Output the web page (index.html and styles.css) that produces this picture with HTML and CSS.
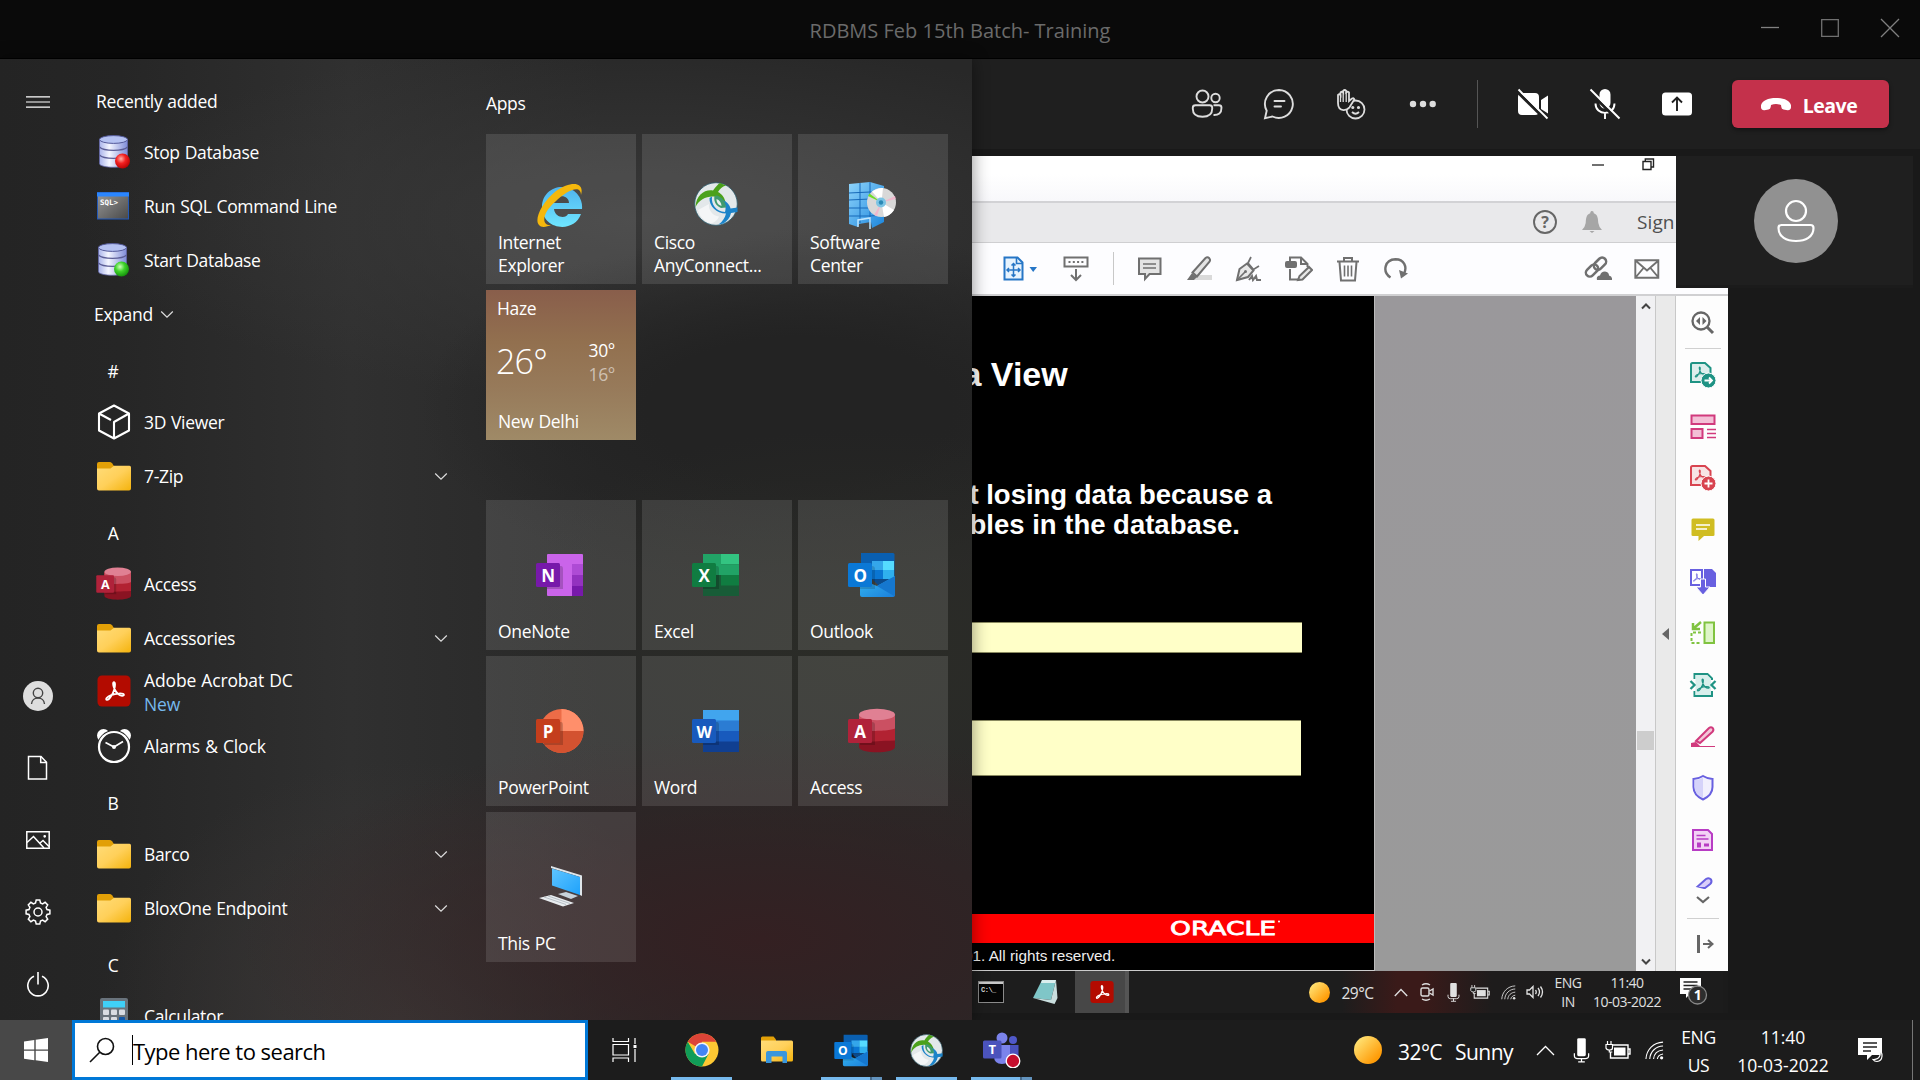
FILE: index.html
```html
<!DOCTYPE html>
<html lang="en">
<head>
<meta charset="utf-8">
<title>RDBMS Feb 15th Batch- Training</title>
<link rel="stylesheet" href="styles.css">
</head>
<body>
<svg class="defs" width="0" height="0" aria-hidden="true">
  <defs>
    <linearGradient id="gFolder" x1="0" y1="0" x2="1" y2="1"><stop offset="0" stop-color="#ffdc78"/><stop offset=".5" stop-color="#ffd05a"/><stop offset="1" stop-color="#f4b30c"/></linearGradient>
    <linearGradient id="gDb" x1="0" x2="1"><stop offset="0" stop-color="#aab4ea"/><stop offset=".35" stop-color="#f4f6ff"/><stop offset="1" stop-color="#7f8cd8"/></linearGradient>
    <linearGradient id="gSun" x1="0" y1="0" x2="1" y2="1"><stop offset=".1" stop-color="#ffe578"/><stop offset=".8" stop-color="#ff9c08"/></linearGradient>
    <linearGradient id="gIe" x1="0" y1="0" x2="0" y2="1"><stop offset="0" stop-color="#4fb4ef"/><stop offset="1" stop-color="#6fe6ff"/></linearGradient>
    <linearGradient id="gTerm" x1="0" y1="0" x2="1" y2="1"><stop offset="0" stop-color="#9a9a9a"/><stop offset="1" stop-color="#484848"/></linearGradient>
    <radialGradient id="gRed" cx=".4" cy=".35" r=".7"><stop offset="0" stop-color="#ffb0a8"/><stop offset=".45" stop-color="#f32020"/><stop offset="1" stop-color="#b00000"/></radialGradient>
    <radialGradient id="gGreen" cx=".4" cy=".35" r=".7"><stop offset="0" stop-color="#d0ffc0"/><stop offset=".45" stop-color="#3fd22a"/><stop offset="1" stop-color="#108a08"/></radialGradient>
    <linearGradient id="gEnv" x1="0" y1="0" x2="1" y2="1"><stop offset="0" stop-color="#35b8f1"/><stop offset="1" stop-color="#1b7fdb"/></linearGradient>
    <linearGradient id="gScreen" x1="0" y1="0" x2="1" y2="1"><stop offset="0" stop-color="#5ec4ff"/><stop offset="1" stop-color="#1ea2fb"/></linearGradient>
    <linearGradient id="gRack" x1="0" y1="0" x2="1" y2="1"><stop offset="0" stop-color="#8fd4fb"/><stop offset="1" stop-color="#1b86dd"/></linearGradient>
  </defs>
  <symbol id="chev" viewBox="0 0 14 9"><path d="M1.2 1.5 7 7.2l5.8-5.7" fill="none" stroke="currentColor" stroke-width="1.2"/></symbol>
  <symbol id="folder" viewBox="0 0 34 29"><path d="M0 7V2Q0 0 2 0H12.500Q14 0 15 1.200L17 4v3z" fill="#e2a007"/><path d="M0 6.500H13.500L17 3.700H32.500Q34 3.700 34 5.500V26.500Q34 28.500 32 28.500H2Q0 28.500 0 26.500z" fill="url(#gFolder)"/></symbol>
  <symbol id="db" viewBox="0 0 34 34"><path d="M2.500 4.500v24c0 5 28 5 28 0v-24z" fill="url(#gDb)" stroke="#6468a8" stroke-width=".8"/><ellipse cx="16.500" cy="4.500" rx="14" ry="3.900" fill="#b5c2f2" stroke="#545a9a" stroke-width="1"/><path d="M2.500 12c4 4.500 24 4.500 28 0M2.500 20c4 4.500 24 4.500 28 0" fill="none" stroke="#5c5e96" stroke-width="1.300"/></symbol>
  <symbol id="pdfmark" viewBox="0 0 20 20"><path d="M9.300 1.500c1.800 0 1.300 4.300.3 7.500-1.200 3.800-4.600 9.600-6.700 9.500-1.900-.2-.5-3 4-4.600 4-1.500 11.500-2.300 12-.5.400 1.700-3.200 1.600-5.700-.6C9.700 9.700 7.500 1.700 9.300 1.500z" fill="none" stroke="currentColor" stroke-width="1.700"/></symbol>
  <symbol id="acrobat" viewBox="0 0 34 32"><rect x=".5" y=".5" width="33" height="31" rx="4.500" fill="#b30b00"/><svg x="7" y="5.500" width="21" height="21" color="#fff"><use href="#pdfmark"/></svg></symbol>
  <symbol id="accessIcon" viewBox="0 0 48 46"><path d="M11 7v32c0 7 36 7 36 0V7z" fill="#8a1322"/><path d="M11 7v27.500c6 0 6 -1 36-2V7z" fill="#b22232"/><path d="M11 7v15c0 1.500 36 1.500 36-2V7z" fill="#cb5062"/><ellipse cx="29" cy="6.500" rx="18" ry="5.800" fill="#e08093"/><path d="M12 14h12q3 0 3 3v20H12z" fill="#000" opacity=".18"/><rect y="11" width="24" height="24" rx="1.500" fill="#b0223a"/><text x="12" y="29.500" class="ico-letter">A</text></symbol>
  <symbol id="outlookIcon" viewBox="0 0 48 46"><path d="M13 1h32q1.500 0 1.500 1.500V25H13z" fill="#0a5fb0"/><path d="M24 9h11v9H24z" fill="#34a6ea"/><path d="M35 9h11v9H35z" fill="#55dbff"/><path d="M24 18h11v9H24z" fill="#0a76d3"/><path d="M35 18h11v9H35z" fill="#2fb0ee"/><path d="M13 18h11v15H13z" fill="#0b55a0"/><path d="M24 27h21L31 34z" fill="#0b4a8c"/><path d="M12 27l17 7L47 24v19q0 2-2 2H14q-2 0-2-2z" fill="url(#gEnv)"/><path d="M29 34l18-10v19l-1 1z" fill="#1577cf"/><path d="M12 14h12q3 0 3 3v20H12z" fill="#000" opacity=".15"/><rect y="11" width="24" height="24" rx="1.500" fill="#0a78d6"/><text x="12" y="29.500" class="ico-letter">O</text></symbol>
  <symbol id="anyc" viewBox="0 0 44 44"><circle cx="22" cy="22" r="21.300" fill="#e3e8ea" stroke="#2c5c6c" stroke-width=".8"/><path d="M1.500 25C2 13 11 7 19 8.500c3-4 5-6.500 7-7.500l6 2.500c-4 1-6 3.500-8 6.500 4 2 7 6 8 12h-4.500c-.5-4-3-7-7.500-7.500C12 14 5 18 1.500 25z" fill="#4ba11b"/><path d="M18 14.500c-1 8 4 15 13 15.500 1.500-5 0-9-3.500-12.500 5.500 2 8.500 5.500 9 9l7-1v4.500l-6.500 1c-1 5-4 8-7.500 10.500l-5 1c4-3 6.500-6.500 7.500-11C22.500 31.500 15 24 15.500 16z" fill="#1b83c9"/><path d="M20.500 14c-1 5 1 9.500 6.500 12l5-.5c-.5-6-4-10.500-9-12z" fill="#3f9a6e"/><path d="M22.500 17c0 4 2 6 5 7 0-3-2-6-5-7z" fill="#e8efef"/><path d="M4 28l11-6c-1 6 4 12 10 12.500-2 5-7 8-11 6S5 34 4 28z" fill="#fff" opacity=".6"/></symbol>
  <symbol id="micIc" viewBox="0 0 20 26"><rect x="5.500" y="0" width="9" height="19" rx="1.500" fill="currentColor"/><path d="M2.500 16v2.500q0 3 3.500 3h8q3.500 0 3.500-3V16M10 21v4M6.500 25h7" fill="none" stroke="currentColor" stroke-width="1.300"/></symbol>
  <symbol id="battIc" viewBox="0 0 26 20"><path d="M8 5h15v13H5.500v-6M23 9h2v5h-2" fill="none" stroke="currentColor" stroke-width="1.400"/><rect x="9" y="7.500" width="11.500" height="8" fill="currentColor"/><path d="M2.500 1v3M6 1v3M1 4.500h6.500V8q0 2-3 2T1 8z M4.300 10v2h3" fill="#1c1c1c" stroke="currentColor" stroke-width="1.200"/></symbol>
  <symbol id="wifiIc" viewBox="0 0 20 20"><g fill="none" stroke="currentColor" stroke-width="1.150"><path d="M1 19C1.500 9 9 1.500 19 1.200"/><path d="M5 19C5.500 11 11.500 5.500 19 5.300"/><path d="M9 19c.5-5.500 4.500-9 10-9.500"/><path d="M13 19c.4-3 3-5 6-5.400"/></g><circle cx="17.500" cy="17.700" r="1.700" fill="currentColor"/></symbol>
  <symbol id="sunIc" viewBox="0 0 28 28"><circle cx="14" cy="14" r="14" fill="url(#gSun)"/></symbol>
  <symbol id="pageIc" viewBox="0 0 26 26"><path d="M2 3.500q0-1.500 1.500-1.500H16l5.500 5v14H2z" fill="currentColor" fill-opacity=".14" stroke="currentColor" stroke-width="2"/></symbol>
</svg>

<main class="meeting">
  <header class="titlebar">
    <h1>RDBMS Feb 15th Batch- Training</h1>
    <div class="winbtns">
      <svg width="20" height="20"><path d="M1 9.500h18" stroke="#808080" stroke-width="1.300"/></svg>
      <svg width="20" height="20"><path d="M1.700 1.700h16.600v16.600H1.700z" fill="none" stroke="#707070" stroke-width="1.300"/></svg>
      <svg width="20" height="20"><path d="M1 1l18 18M19 1 1 19" stroke="#808080" stroke-width="1.300"/></svg>
    </div>
  </header>
  <nav class="callbar">
    <span class="tool"><svg width="32" height="30" viewBox="0 0 32 30" fill="none" stroke="#ddd" stroke-width="1.900"><circle cx="11.500" cy="7.500" r="6"/><circle cx="24.500" cy="9" r="4.200"/><path d="M4.500 16.200h14.200q2.500 0 2.500 2.500v1q0 8-9.700 8t-9.700-8v-1q0-2.500 2.700-2.500zM22.500 16.200h5.500q2.500 0 2.500 2.500c0 5.500-3 7.500-8 7.300"/></svg></span>
    <span class="tool"><svg width="32" height="32" viewBox="0 0 32 32" fill="none" stroke="#ddd" stroke-width="1.900"><path d="M16 2a14 14 0 1 1-6.500 26.500L2 30.200l1.700-7.500A14 14 0 0 1 16 2z"/><path d="M11.500 13h10M11.500 18.500h6.500" stroke-linecap="round"/></svg></span>
    <span class="tool"><svg width="30" height="32" viewBox="0 0 30 32" fill="none" stroke="#ddd" stroke-width="1.800"><circle cx="19.500" cy="21.500" r="9"/><path d="M2 7q1.500-1.500 2.500 0V4.500q1.500-1.500 2.700 0V2.800q1.500-1.600 3 0v1.500q1.500-1.200 2.800 0V13l3-2.500q2-.8 2.300 1l-4.800 7.800q-2.500 3-6 2.800Q2 21.600 2 15z" fill="#1f1f1f"/><path d="M4.500 7v7M7.200 5v9M10.200 4.500v9.500" stroke-width="1.300"/><path d="M16 24q3.500 3.500 7 0"/><circle cx="16.800" cy="19.500" r=".7" fill="#ddd"/><circle cx="22.500" cy="19.500" r=".7" fill="#ddd"/></svg></span>
    <span class="tool"><svg width="28" height="8"><g fill="#ddd"><circle cx="4" cy="4" r="3.200"/><circle cx="14" cy="4" r="3.200"/><circle cx="23.700" cy="4" r="3.200"/></g></svg></span>
    <span class="divider"></span>
    <span class="tool"><svg width="32" height="32" viewBox="0 0 32 32"><path d="M5 5h13q4 0 4 4v14q0 4-4 4H5q-4 0-4-4V9q0-4 4-4zM24 12l7-4.500v18L24 21z" fill="#fff"/><path d="M0 3.500 29 32" stroke="#1f1f1f" stroke-width="3"/><path d="M1.500 1.500 30.500 30.500" stroke="#fff" stroke-width="1.900"/></svg></span>
    <span class="tool"><svg width="32" height="32" viewBox="0 0 32 32"><rect x="10.500" y="1" width="11" height="19.500" rx="5.500" fill="#fff"/><path d="M6.500 15.500c0 12.500 19 12.500 19 0M16 25v6" fill="none" stroke="#fff" stroke-width="1.900"/><path d="M0 3.500 29 32" stroke="#1f1f1f" stroke-width="3"/><path d="M1.500 1.500 30.500 30.500" stroke="#fff" stroke-width="1.900"/></svg></span>
    <span class="tool"><svg width="32" height="24" viewBox="0 0 32 24"><rect x="1" y=".5" width="30" height="23" rx="3.500" fill="#fff"/><path d="M16 19V6M11 10.500 16 5.500l5 5" fill="none" stroke="#1f1f1f" stroke-width="1.900"/></svg></span>
    <button class="leave"><svg width="30" height="13" viewBox="0 0 30 13"><path d="M15 0C24 0 31 3.500 30 9.500q-.5 3-3.500 2.700l-4-.7q-2-.5-2.200-2.500L20 7Q15 5 10 7l-.3 2q-.3 2-2.200 2.500l-4 .7Q.5 12.500 0 9.500C-1 3.500 6 0 15 0z" fill="#fff"/></svg><span>Leave</span></button>
  </nav>

  <section class="stage">
    <div class="share">
      <div class="acro-title">
        <svg width="12" height="12"><path d="M0 7h12" stroke="#333" stroke-width="1.400"/></svg>
        <svg width="13" height="13"><path d="M1 3.500h8v8H1zM3.300 3.500V1h8.200v8H9" fill="none" stroke="#222" stroke-width="1.400"/></svg>
      </div>
      <div class="acro-tabs">
        <svg width="24" height="24"><circle cx="12" cy="12" r="11" fill="none" stroke="#666" stroke-width="1.900"/><text x="12" y="17.500" text-anchor="middle" class="help">?</text></svg>
        <svg width="20" height="22"><path d="M10 0q1.800 0 1.800 2.200C16 3.500 16 8 16.300 12q.4 3.500 3.700 7H0q3.300-3.500 3.700-7C4 8 4 3.500 8.200 2.200 8.200 0 10 0 10 0zM7.500 20h5l-2.500 2z" fill="#a6a6a6"/></svg>
        <span class="signin">Sign</span>
      </div>
      <div class="acro-tools">
        <svg class="t-fit" width="34" height="26" viewBox="0 0 34 26"><path d="M1.500 1.500h13l5 5v17H1.500z" fill="#e6f3fe" stroke="#2676c6" stroke-width="2"/><path d="M13.500 1.500v6h6" fill="none" stroke="#2676c6" stroke-width="1.600"/><path d="M10.500 8v12M4.500 14h12M8.500 9.500l2-2 2 2M8.500 18.500l2 2 2-2M6 12l-2 2 2 2M15 12l2 2-2 2" fill="none" stroke="#2676c6" stroke-width="1.500"/><path d="M26.500 11h7.500l-3.800 5z" fill="#2676c6"/></svg>
        <svg class="t-kb" width="26" height="26" fill="none" stroke="#707070" stroke-width="2"><path d="M1.500 1.500h23v9h-23z"/><path d="M5.500 6h16" stroke-dasharray="2 2.300" stroke-width="2.200"/><path d="M13 13v11M8 19l5 5 5-5"/></svg>
        <i class="t-sep"></i>
        <svg class="t-slot" width="26" height="26"><path d="M2 2.500h21.500v15.500h-11L8 23v-5H2z" fill="#e4e4e4" stroke="#707070" stroke-width="2"/><path d="M6 8h13M6 12h13" stroke="#707070" stroke-width="1.500"/></svg>
        <svg class="t-slot" width="26" height="26"><path d="M12 19h14v5H8z" fill="#dadada"/><path d="M6.500 16.500 19.500 2q2-1.500 3.800.3 1.500 1.700 0 3.700L11 20.500z" fill="#e4e4e4" stroke="#707070" stroke-width="2"/><path d="M6 17l5 4-3 3H1z" fill="#707070"/></svg>
        <svg class="t-slot" width="26" height="26" fill="none" stroke="#707070" stroke-width="2"><path d="M2 24 4.500 13 12 7.500l6.500 7L13 21z" fill="#e8e8e8"/><path d="M2 24l8-8M16 1l-3 6 5.500 6.500L24 10" stroke-width="1.700"/><circle cx="10.500" cy="15.500" r="1.500" fill="#707070" stroke="none"/><path d="M14 24l3-4 1 4 3-4 1 4h4"/></svg>
        <svg class="t-slot" width="28" height="26" fill="none" stroke="#707070" stroke-width="2"><path d="M5 5V1.500h11L22.500 8v3M16 1.500V8h6.500M5 13v10.500h8"/><rect x="1" y="6" width="10" height="5" rx="1" fill="#707070"/><path d="M13 24l1.500-4L24 11l3 3-9.500 9.500z" fill="#e8e8e8"/></svg>
        <svg class="t-slot" width="24" height="26" fill="none" stroke="#707070" stroke-width="2"><path d="M1 5.500h22M8 5V2h8v3M3.500 6l1.500 18.500h14L20.500 6" /><path d="M8.500 9.500v11M12 9.500v11M15.500 9.500v11" stroke-width="1.600"/></svg>
        <svg class="t-slot" width="26" height="26"><path d="M7.500 21.500C-1 16 1.500 3.500 12.500 3.200c8.500 0 12 7.500 8.500 14.500" fill="none" stroke="#707070" stroke-width="2.400"/><path d="M16 14l9 3.500-7 5z" fill="#707070"/></svg>
        <svg class="t-link" width="28" height="26" viewBox="0 0 28 26"><g fill="none" stroke="#707070" stroke-width="2.500"><rect x="1" y="10.500" width="14" height="8" rx="4" transform="rotate(-45 8 14.500)"/><rect x="9" y="3.700" width="14" height="8" rx="4" transform="rotate(-45 16 7.700)"/></g><path d="M13 24q-1-4 3-4.500 1-4 5-4 4 .5 4 4 3.500.7 3 4.500z" fill="#707070"/></svg>
        <svg class="t-mail" width="26" height="20"><path d="M1.300 1.300h23v17.400h-23zM1.500 1.500 13 11.500l11.500-10M1.500 18.500 9.500 9M24.500 18.500 16.500 9" fill="none" stroke="#707070" stroke-width="1.900"/></svg>
      </div>
      <div class="acro-body">
        <article class="slide">
          <h2>a View</h2>
          <p class="lead">t losing data because a</p>
          <p class="lead second">bles in the database.</p>
          <div class="code one"></div>
          <div class="code two"></div>
          <div class="brand"><svg width="112" height="20"><text x="0" y="16.500" textLength="106" lengthAdjust="spacingAndGlyphs">ORACLE</text><circle cx="109" cy="3.500" r="1" fill="#fff"/></svg></div>
          <p class="copy">01. All rights reserved.</p>
        </article>
        <div class="grey"></div>
        <div class="scroll">
          <svg width="10" height="8"><path d="M1 6.500 5 2.500l4 4" fill="none" stroke="#444" stroke-width="2"/></svg>
          <i></i>
          <svg width="10" height="8"><path d="M1 1.500 5 5.500l4-4" fill="none" stroke="#444" stroke-width="2"/></svg>
        </div>
        <div class="collapse"><svg width="7" height="12"><path d="M7 0v12L0 6z" fill="#666"/></svg></div>
        <aside class="rail">
          <span class="r-zoom"><svg width="26" height="26"><circle cx="11" cy="11" r="8.500" fill="none" stroke="#666" stroke-width="2.300"/><path d="M17 17l6 6" stroke="#666" stroke-width="3"/><path d="M10 7v8l-4-4zM12.500 7v8l4-4z" fill="#666"/></svg></span>
          <span class="teal"><svg width="28" height="28"><use href="#pageIc" width="26" height="26"/><svg x="5" y="5" width="12" height="12"><use href="#pdfmark"/></svg><circle cx="19.500" cy="19.500" r="7.500" fill="currentColor" stroke="#fff"/><path d="M15.500 19.500h7M20 16.500l3 3-3 3" fill="none" stroke="#fff" stroke-width="1.800"/></svg></span>
          <span class="pink"><svg width="26" height="26" fill="none" stroke="currentColor" stroke-width="2"><path d="M1.500 1.500h23V10h-23zM1.500 15h11v9h-11z" fill="#f3bfd6"/><path d="M17 15.500h9M17 19.500h9M17 23.500h9" stroke-width="1.300"/></svg></span>
          <span class="red"><svg width="28" height="28"><use href="#pageIc" width="26" height="26"/><svg x="5" y="5" width="12" height="12"><use href="#pdfmark"/></svg><circle cx="19.500" cy="19.500" r="7.500" fill="currentColor" stroke="#fff"/><path d="M15.500 19.500h8M19.500 15.500v8" stroke="#fff" stroke-width="1.800"/></svg></span>
          <span class="yellow"><svg width="26" height="26"><path d="M3 1.500h20q1.500 0 1.500 1.500v15q0 1-1.500 1h-9L8.500 24v-5H3q-1.500 0-1.500-1V3q0-1.500 1.500-1.500z" fill="currentColor"/><path d="M6 8h14M6 12h11" stroke="#fff" stroke-width="1.600"/></svg></span>
          <span class="violet"><svg width="28" height="28"><path d="M2 2h11v15H2z" fill="#fff" stroke="currentColor" stroke-width="2"/><svg x="3.500" y="5" width="9" height="9"><use href="#pdfmark"/></svg><path d="M15 1h8l4 4v14H15z" fill="currentColor"/><path d="M11.500 11h5v8h4.500L14 27l-7-8h4.500z" fill="currentColor" stroke="#fff"/></svg></span>
          <span class="green"><svg width="26" height="26" fill="none" stroke="currentColor" stroke-width="2"><path d="M14.500 2.500h9.500V23h-9.500z" fill="#def5c8"/><path d="M11 12.500H1.500V23H11" stroke-dasharray="3 2"/><path d="M11 2 4 8M3 3v6h7" stroke-width="2.500"/></svg></span>
          <span class="teal"><svg width="28" height="28"><path d="M5.500 8V3h13l4.500 4.500V9M5.500 20v5H23v-5" fill="none" stroke="currentColor" stroke-width="2"/><path d="M6.500 4h11.500l4 4v16H6.500z" fill="#d8efec"/><svg x="7" y="7" width="14" height="14"><use href="#pdfmark"/></svg><path d="M1.500 10 5.500 14l-4 4M26.500 10l-4 4 4 4" fill="none" stroke="currentColor" stroke-width="2.300"/></svg></span>
          <span class="pink"><svg width="26" height="26"><path d="M1 19l5-1 4 4H25v-5H15l10 0v6H1z" fill="currentColor"/><path d="M6 17 19 4q2-1.500 3.700 0 1.500 2-.2 3.700L10 19z" fill="#f3c6d8" stroke="currentColor" stroke-width="2"/></svg></span>
          <span class="violet"><svg width="26" height="28"><path d="M13 2q5 3 9.500 3v8q0 8-9.500 12.500Q3.500 21 3.500 13V5Q8 5 13 2z" fill="#f1f0fd" stroke="currentColor" stroke-width="2"/><path d="M13 3.500V24Q4.500 20 4.500 13V6Q9 6 13 3.500z" fill="#d5d3fa"/></svg></span>
          <span class="magenta"><svg width="26" height="26"><path d="M3 3h15l4 4v16H3z" fill="#f3d2f5" stroke="currentColor" stroke-width="2"/><path d="M6.500 8.500h9M6.500 12h12" stroke="currentColor" stroke-width="1.500"/><path d="M7 15.500h4v5H7zM14 16.500h5v3h-5z" fill="currentColor"/></svg></span>
          <span class="r-more violet"><svg width="24" height="30"><path d="M5 12 15 3q3-1.700 5 .5 1.300 2.500-.8 4.500L14 12z" fill="#d9cdfa" stroke="currentColor" stroke-width="2"/><path d="M3 10.500 0 14h17" fill="#fdfdfd" stroke="none"/><path d="M6 21l6 5 6-5" fill="none" stroke="#666" stroke-width="2.200"/></svg></span>
          <span class="r-out"><svg width="18" height="20"><path d="M2.500 1v18" stroke="#666" stroke-width="3"/><path d="M7 10h9M12 6l4.500 4L12 14" fill="none" stroke="#666" stroke-width="2"/></svg></span>
        </aside>
      </div>
      <div class="rtask">
        <span class="r-cmd"><svg width="26" height="22"><rect x=".5" y=".5" width="25" height="21" fill="#050505" stroke="#8a8a8a"/><path d="M1 2h24" stroke="#c8c8c8" stroke-width="2"/><text x="3" y="11" class="tiny">C:\_</text></svg></span>
        <span class="r-note"><svg width="26" height="26"><path d="M10 1h14l-5 20L1 19z" fill="#7fc6c8"/><path d="M10 1h14l-1 3H9z" fill="#dceeee"/><path d="M24 1l1.500 18-3 6L1 19l18 2z" fill="#c9dede"/></svg></span>
        <span class="r-acro"><svg width="24" height="24"><use href="#acrobat"/></svg></span>
        <span class="r-sun"><svg width="21" height="21"><use href="#sunIc"/></svg></span>
        <span class="r-temp">29°C</span>
        <span class="r-c1"><svg width="14" height="9"><path d="M.8 8 7 1.500 13.200 8" fill="none" stroke="#ddd" stroke-width="1.400"/></svg></span>
        <span class="r-c2"><svg width="14" height="18" fill="none" stroke="#ddd" stroke-width="1.400"><rect x="1" y="5" width="8" height="8" rx="1.500"/><path d="M9.500 8l3.500-2v6l-3.500-2M2 2q4-2.500 8 0M2 16q4 2.500 8 0"/></svg></span>
        <span class="r-c2"><svg width="15" height="19"><use href="#micIc"/></svg></span>
        <span class="r-c3"><svg width="20" height="16"><use href="#battIc"/></svg></span>
        <span class="r-c3"><svg width="15" height="15"><use href="#wifiIc"/></svg></span>
        <span class="r-c2"><svg width="18" height="14" fill="none" stroke="#e4e4e4" stroke-width="1.300"><path d="M1 5h2.500L7 1.500v11L3.500 9H1zM9.500 5q1.500 2 0 4M12 3q3 4 0 8M14.500 1.500q4 5.500 0 11"/></svg></span>
        <span class="r-lang">ENG<br>IN</span>
        <span class="r-time">11:40<br>10-03-2022</span>
        <span class="r-bell"><svg width="28" height="30"><path d="M0 1h21v16h-11l-4 4v-4H0z" fill="#fff"/><path d="M3.500 5h14M3.500 8.500h14M3.500 12h8" stroke="#222" stroke-width="1.400"/><circle cx="17.500" cy="18" r="9" fill="#2d2d2d" stroke="#888" stroke-width="1.300"/><text x="17.500" y="23" text-anchor="middle" class="badge">1</text></svg></span>
      </div>
    </div>
    <div class="participant"><div class="avatar"><svg width="38" height="44" fill="none" stroke="#fff" stroke-width="2.200"><circle cx="19" cy="12" r="10"/><path d="M4.500 26h29q3 0 3 3c0 9-8 13-17.500 13S1.500 38 1.500 29q0-3 3-3z"/></svg></div></div>
  </section>
</main>

<section class="start">
  <nav class="srail">
    <svg width="24" height="12"><path d="M0 .8h24M0 6h24M0 11.200h24" stroke="#fff" stroke-width="1.200"/></svg>
    <div class="srail-bottom">
      <span><svg width="30" height="30"><circle cx="15" cy="15" r="15" fill="#dedede"/><g fill="none" stroke="#444" stroke-width="1.400"><circle cx="15" cy="12" r="4.700"/><path d="M8.500 23c.5-8 12.500-8 13 0"/></g></svg></span>
      <span><svg width="22" height="26" fill="none" stroke="#fff" stroke-width="1.500"><path d="M1.500 1.500H14l5.500 5.700V24h-18z"/><path d="M13.700 1.500v6h6"/></svg></span>
      <span><svg width="24" height="18" fill="none" stroke="#fff" stroke-width="1.500"><path d="M.8.800h22.400v16.400H.8z"/><path d="M1 11.500 7.500 5.500 18 17M13.500 12.500l3.500-3 6 6"/><circle cx="18.700" cy="5.300" r=".6" fill="#fff"/></svg></span>
      <span><svg width="26" height="26" viewBox="0 0 26 26" fill="none" stroke="#fff" stroke-width="1.500"><circle cx="13" cy="13" r="4"/><path d="M10.500 4l.7-2.900h3.600l.7 2.900 2.100.9L20.100 3.300l2.600 2.600-1.600 2.500.9 2.100 2.900.7v3.600l-2.900.7-.9 2.100 1.600 2.500-2.600 2.600-2.500-1.600-2.100.9-.7 2.900h-3.600l-.7-2.900-2.100-.9-2.500 1.600-2.600-2.600 1.600-2.500-.9-2.100-2.900-.7v-3.600l2.900-.7.900-2.100-1.600-2.500 2.600-2.600 2.500 1.600z"/></svg></span>
      <span><svg width="24" height="25" fill="none" stroke="#fff" stroke-width="1.600"><path d="M8 4.300a10.200 10.200 0 1 0 8 0M12 0v12.500"/></svg></span>
    </div>
  </nav>
  <div class="applist">
    <div class="head first">Recently added</div>
    <div class="app"><svg width="34" height="34"><use href="#db"/><circle cx="25.500" cy="26" r="7.500" fill="url(#gRed)"/></svg><span>Stop Database</span></div>
    <div class="app"><svg width="34" height="28"><rect x=".5" y=".5" width="31" height="26.500" fill="url(#gTerm)" stroke="#2258b8"/><path d="M0 2.500h32" stroke="#2a86ff" stroke-width="4"/><text x="3" y="13" class="sql">SQL&gt;</text></svg><span>Run SQL Command Line</span></div>
    <div class="app"><svg width="34" height="34" viewBox="1 0 34 34"><use href="#db" width="34" height="34"/><circle cx="25.500" cy="26" r="7.500" fill="url(#gGreen)"/></svg><span>Start Database</span></div>
    <div class="head expand">Expand<svg class="chev" width="14" height="9"><use href="#chev"/></svg></div>
    <div class="letter">#</div>
    <div class="app"><svg width="34" height="36" fill="none" stroke="#fff" stroke-width="2.100" stroke-linejoin="round"><path d="M17 1.500 32 9.500v17L17 34.500 2 26.500v-17zM2 9.500l12 6.500M32 9.500 17 18v16"/></svg><span>3D Viewer</span></div>
    <div class="app"><svg width="34" height="29"><use href="#folder"/></svg><span>7-Zip</span><svg class="chev" width="14" height="9"><use href="#chev"/></svg></div>
    <div class="letter">A</div>
    <div class="app"><svg class="pull" width="36" height="34"><use href="#accessIcon"/></svg><span>Access</span></div>
    <div class="app"><svg width="34" height="29"><use href="#folder"/></svg><span>Accessories</span><svg class="chev" width="14" height="9"><use href="#chev"/></svg></div>
    <div class="app two"><svg width="34" height="32"><use href="#acrobat"/></svg><span>Adobe Acrobat DC<small>New</small></span></div>
    <div class="app loose"><svg width="34" height="36"><circle cx="6.500" cy="7.500" r="6.500" fill="#fff"/><circle cx="27.500" cy="7.500" r="6.500" fill="#fff"/><circle cx="17" cy="19" r="17" fill="#292929"/><circle cx="17" cy="19" r="15" fill="none" stroke="#fff" stroke-width="2.200"/><path d="M8.500 14.500 17 19l9-5.500" fill="none" stroke="#fff" stroke-width="1.700"/><circle cx="17" cy="19" r="2" fill="#fff"/></svg><span>Alarms &amp; Clock</span></div>
    <div class="letter">B</div>
    <div class="app"><svg width="34" height="29"><use href="#folder"/></svg><span>Barco</span><svg class="chev" width="14" height="9"><use href="#chev"/></svg></div>
    <div class="app"><svg width="34" height="29"><use href="#folder"/></svg><span>BloxOne Endpoint</span><svg class="chev" width="14" height="9"><use href="#chev"/></svg></div>
    <div class="letter">C</div>
    <div class="app"><svg width="34" height="36"><rect x="3" width="28" height="36" rx="2" fill="#69737c"/><rect x="6" y="3" width="22" height="6.500" fill="#3fd0f8"/><g fill="#d8dce2"><rect x="6" y="11.500" width="6" height="5.500" rx="1"/><rect x="14" y="11.500" width="6" height="5.500" rx="1"/><rect x="22" y="11.500" width="6" height="5.500" rx="1"/><rect x="6" y="19" width="6" height="6" rx="1"/><rect x="14" y="19" width="6" height="6" rx="1"/></g><rect x="22" y="19" width="6" height="6" rx="1" fill="#0f57a8"/></svg><span>Calculator</span></div>
  </div>
  <div class="tiles">
    <div class="ghead">Apps</div>
    <div class="grid">
      <div class="tile"><svg class="raise" width="46" height="46"><path d="M25 5a20 20 0 0 1 20 22H17c1 9 12 10 14 5h13C37 52 5 48 5 25 5 13 14 5 25 5zM17 21h15c0-9-14-9-15 0z" fill="url(#gIe)"/><path d="M44 13C48-1 33-1 19 9 4 21-3 38 2 43c2 3 8 2 12 0-10 1-9-12 4-23C30 8 44 2 44 13z" fill="#f5b80d"/></svg><span>Internet<br>Explorer</span></div>
      <div class="tile"><svg class="raise" width="44" height="44"><use href="#anyc"/></svg><span>Cisco<br>AnyConnect...</span></div>
      <div class="tile"><svg class="raise" width="48" height="48"><path d="M1 2 22 0l14 4v36l-12 6-1-6-12 2-1 3-9-3z" fill="url(#gRack)"/><path d="M22 0v42M1 11l21-1 14 2M1 18l21-1 14 2M1 26h21l14 1M1 34h21l14-1M12 1v40" stroke="#1668b8" fill="none" stroke-width="1"/><path d="M10 45v-7l12-2v11" fill="none" stroke="#bfe6ff" stroke-width="1.500"/><circle cx="33.500" cy="20.500" r="14.500" fill="#d8d8d8"/><path d="M33.500 20.500 24 9.500q6-4 11-3.500zM33.500 20.500 46 28q-4 6-10 7z" fill="#fff"/><path d="M33.500 20.500 20 14l1.500-2.500z" fill="#6fdc2a"/><path d="M33.500 20.500 47 14l.7 3zM33.500 20.500 26 33l3 1z" fill="#efb7cd"/><circle cx="33" cy="20.500" r="5" fill="#7cc4e4"/><circle cx="33" cy="20.500" r="2.200" fill="#2a88b4"/></svg><span>Software<br>Center</span></div>
      <div class="tile weather"><b>Haze</b><div class="wrow"><em>26°</em><div>30°<i>16°</i></div></div><b class="city">New Delhi</b></div>
    </div>
    <div class="grid lower">
      <div class="tile"><svg width="48" height="46"><path d="M11 3q0-1 1-1h34q1 0 1 1v40q0 1-1 1H12q-1 0-1-1z" fill="#ca64ea"/><path d="M36 12h11v11H36z" fill="#ae4bd5"/><path d="M36 23h11v10.500H36z" fill="#9332bf"/><path d="M36 33.500h11V44H36z" fill="#7719aa"/><path d="M11 14h14q2 0 2 3v20H11z" opacity=".18"/><rect y="11" width="24" height="24" rx="1.500" fill="#7719aa"/><text x="12" y="29.500" class="ico-letter">N</text></svg><span>OneNote</span></div>
      <div class="tile"><svg width="48" height="46"><path d="M11 2h36v42H11z" fill="#185c37"/><path d="M11 2h18v21H11z" fill="#21a366"/><path d="M29 2h18v10.500H29z" fill="#33c481"/><path d="M29 12.500h18V23H29z" fill="#21a366"/><path d="M29 23h18v10.500H29z" fill="#107c41"/><path d="M11 14h14q2 0 2 3v20H11z" opacity=".18"/><rect y="11" width="24" height="24" rx="1.500" fill="#107c41"/><text x="12" y="29.500" class="ico-letter">X</text></svg><span>Excel</span></div>
      <div class="tile"><svg width="48" height="46"><use href="#outlookIcon"/></svg><span>Outlook</span></div>
      <div class="tile"><svg width="48" height="46"><circle cx="25.500" cy="23" r="22" fill="#ed6c47"/><path d="M25.500 1a22 22 0 0 1 22 22h-22z" fill="#ff8f6b"/><path d="M3.500 23h44a22 22 0 0 1-44 0z" fill="#d35230"/><path d="M6 14h19q2 0 2 3v20H8z" opacity=".18"/><rect y="11" width="24" height="24" rx="1.500" fill="#c43e1c"/><text x="12" y="29.500" class="ico-letter">P</text></svg><span>PowerPoint</span></div>
      <div class="tile"><svg width="48" height="46"><path d="M11 2h36v11H11z" fill="#41a5ee"/><path d="M11 12.500h36V23H11z" fill="#2b7cd3"/><path d="M11 23h36v11H11z" fill="#185abd"/><path d="M11 33.500h36V44H11z" fill="#103f91"/><path d="M11 14h14q2 0 2 3v20H11z" opacity=".18"/><rect y="11" width="24" height="24" rx="1.500" fill="#185abd"/><text x="12" y="29.500" class="ico-letter w">W</text></svg><span>Word</span></div>
      <div class="tile"><svg width="48" height="46"><use href="#accessIcon"/></svg><span>Access</span></div>
      <div class="tile"><svg width="48" height="46"><path d="M15 2l31 9.500v20.500l-2-1V13L15 4z" fill="#dfe6ea"/><path d="M16 4.500l28 8.500v18L16 21.500z" fill="url(#gScreen)"/><path d="M22 30l8-2 12 4-7 3z" fill="#c7d2da"/><path d="M3 34l12-3 23 8-11 3.500z" fill="#e9edf0"/><path d="M8 33l22 7.500M12 32l22 7.500" stroke="#a9b4bb" stroke-width=".8"/></svg><span>This PC</span></div>
    </div>
  </div>
</section>

<footer class="taskbar">
  <span class="winbtn"><svg width="24" height="24"><path d="M0 3.500 10.300 2v9.500H0zM11.700 1.800 24 0v11.500H11.700zM0 12.800h10.300v9.500L0 20.800zM11.700 12.800H24V24l-12.300-1.700z" fill="#fff"/></svg></span>
  <label class="search"><svg width="26" height="26" fill="none" stroke="#111" stroke-width="1.600"><circle cx="16.500" cy="9.500" r="8"/><path d="M11 15 1 25"/></svg><i class="caret"></i><span>Type here to search</span></label>
  <span class="taskview"><svg width="26" height="24" fill="none" stroke="#fff" stroke-width="1.200"><path d="M1 0v3.500h15.500V0M1 6.500h15.500v10.500H1zM1 24v-4h15.500v4M23 0v6M23 11v13"/><path d="M21.500 7h3v3h-3z" fill="#fff" stroke="none"/></svg></span>
  <span class="pin on"><svg width="34" height="34"><circle cx="17" cy="17" r="16.500" fill="#fdc833"/><path d="M17 17 2.700 8.700A16.500 16.500 0 0 1 31.300 8.700H17z" fill="#dc4437"/><path d="M2.700 8.700A16.500 16.500 0 0 0 17 33.500L23.500 21 17 17l-7 4z" fill="#109d58"/><circle cx="17" cy="17" r="7.600" fill="#f4f4f4"/><circle cx="17" cy="17" r="6" fill="#4285f4"/></svg></span>
  <span class="pin"><svg width="32" height="28"><path d="M0 6V2Q0 .5 1.500.5h11l2.500 3V6z" fill="#e2a007"/><path d="M0 4.500h30.500Q32 4.500 32 6v18q0 1.500-1.500 1.500h-29Q0 25.500 0 24z" fill="url(#gFolder)"/><path d="M5 27V17q0-2 2-2h17q2 0 2 2v10h-4.500v-6.500h-11V27z" fill="#3a96dd"/></svg></span>
  <span class="pin on multi"><svg width="35" height="33"><use href="#outlookIcon"/></svg></span>
  <span class="pin on"><svg width="33" height="33"><use href="#anyc"/></svg></span>
  <span class="pin on multi"><svg width="38" height="36"><circle cx="19" cy="6" r="5.500" fill="#7b83eb"/><circle cx="30" cy="8" r="4" fill="#5059c9"/><path d="M22 13h13.500v12q-1 7-8 6z" fill="#4a52bd"/><path d="M11 13h16v11q0 8-8 8t-8-8z" fill="#7b83eb"/><rect y="8.500" width="18.500" height="18" rx="1.500" fill="#4b53bc"/><text x="9.200" y="22" class="ico-t">T</text><circle cx="30" cy="29" r="6.800" fill="#c50f2e" stroke="#fff" stroke-width="1.300"/></svg></span>
  <span class="tray-sun"><svg width="28" height="28"><use href="#sunIc"/></svg></span>
  <span class="tray-weather"><span>32°C</span><span>Sunny</span></span>
  <span class="tray-ic"><svg width="19" height="11"><path d="M1 10 9.500 1.500 18 10" fill="none" stroke="#fff" stroke-width="1.300"/></svg></span>
  <span class="tray-ic"><svg width="19" height="25"><use href="#micIc"/></svg></span>
  <span class="tray-ic"><svg width="26" height="20"><use href="#battIc"/></svg></span>
  <span class="tray-ic"><svg width="19" height="19"><use href="#wifiIc"/></svg></span>
  <span class="tray-lang">ENG<br>US</span>
  <span class="tray-time">11:40<br>10-03-2022</span>
  <span class="tray-bell"><svg width="26" height="26"><path d="M0 1h24v17h-10l-5 5v-5H0z" fill="#fff"/><path d="M5 6h14M5 10h14M5 14h8" stroke="#222" stroke-width="1.300"/><path d="M20 12.500c4 3 2.500 10.500-5 10 1 1.500 2.500 2 4 2 6-.5 7-9.500 1-12z" fill="#222" stroke="#fff" stroke-width="1.200"/></svg></span>
  <i class="peek"></i>
</footer>
</body>
</html>
```
FILE: styles.css
```css
* { box-sizing: border-box; }
body {
  margin: 0;
  width: 1920px;
  height: 1080px;
  overflow: hidden;
  position: relative;
  display: grid;
  grid-template-rows: 1020px 60px;
  background: #191919;
  color: #fff;
  font-family: "Open Sans", "Noto Sans", sans-serif;
}
h1, h2, p { margin: 0; font-weight: 400; }
i, em, b { font-style: normal; font-weight: 400; }
svg { display: block; flex: none; }
.defs { position: absolute; }
.ico-letter { font: 700 17px "Open Sans", sans-serif; fill: #fff; text-anchor: middle; }
.ico-letter.w { font-size: 16px; }
.ico-t { font: 700 13px "Open Sans", sans-serif; fill: #fff; text-anchor: middle; }

/* Meeting window */
.meeting { display: flex; flex-direction: column; min-height: 0; }
.titlebar {
  height: 59px;
  display: grid;
  grid-template-columns: 1fr auto 1fr;
  align-items: center;
  background: #0a0a0a;
  border-bottom: 1px solid #000;
}
.titlebar h1 { grid-column: 2; font-size: 20px; letter-spacing: 0; color: #6b6b6b; padding-top: 2px; }
.winbtns { justify-self: end; display: flex; gap: 40px; padding-right: 20px; margin-top: -2px; }
.callbar {
  height: 90px;
  display: flex;
  justify-content: flex-end;
  align-items: center;
  padding-right: 31px;
  background: #1f1f1f;
}
.tool { width: 72px; height: 90px; display: flex; align-items: center; justify-content: center; }
.divider { width: 1px; height: 48px; margin: 0 19px 0 18px; background: #555; }
.leave {
  width: 157px;
  height: 48px;
  margin-left: 19px;
  padding: 0 8px 0 5px;
  border: 0;
  border-radius: 6px;
  background: #c4314b;
  color: #fff;
  font: 700 19.500px "Open Sans", sans-serif;
  letter-spacing: -.5px;
  display: flex;
  align-items: center;
  justify-content: center;
  gap: 12px;
  box-shadow: 0 2px 4px rgba(0, 0, 0, .4);
}
.leave span { padding-top: 2px; }
.stage { position: relative; flex: 1; padding-top: 7px; background: #191919; }
.participant {
  position: absolute;
  left: 1676px;
  top: 7px;
  width: 237px;
  height: 132px;
  background: #1f1f1f;
  border-bottom: 3px solid #1b1b1b;
  display: flex;
  justify-content: center;
  padding-left: 2px;
}
.avatar {
  width: 84px;
  height: 84px;
  margin-top: 23px;
  border-radius: 50%;
  background: #919191;
  display: flex;
  align-items: center;
  justify-content: center;
}

/* Shared screen */
.share { width: 756px; margin-left: 972px; background: #fdfdfd; }
.acro-title {
  height: 45px;
  display: flex;
  justify-content: flex-end;
  gap: 38px;
  padding: 2px 73px 0 0;
  background: linear-gradient(#fff 40%, #f8f8fb);
}
.acro-tabs {
  height: 42px;
  display: flex;
  align-items: center;
  justify-content: flex-end;
  background: #e9e9eb;
  border-top: 2px solid #d2d2d5;
  border-bottom: 1px solid #cfcfd1;
  padding-bottom: 2px;
}
.acro-tabs svg + svg { margin-left: 25px; }
.signin { width: 91px; margin-left: 35px; font-size: 19px; line-height: 30px; letter-spacing: .1px; color: #505050; }
.help { font: 700 16px "Open Sans", sans-serif; fill: #666; }
.acro-tools { height: 53px; display: flex; align-items: center; background: #fdfdff; border-bottom: 2px solid #d0d0d2; }
.t-fit { margin-left: 31px; }
.t-kb { margin-left: 26px; }
.t-sep { width: 1px; height: 33px; margin: 0 11.500px 0 24px; background: #c8c8c8; }
.t-slot { margin: 0 11.600px; }
.t-link { margin-left: 163px; }
.t-mail { margin-left: 22px; }
.acro-body { height: 675px; display: flex; }
.slide {
  width: 403px;
  background: #000;
  border-right: 1px solid #bbb;
  border-bottom: 1px solid #ccc;
  font-family: "Liberation Sans", Arial, sans-serif;
  color: #fff;
}
.slide h2 { margin: 59px 0 0 -10px; font-size: 34px; font-weight: 700; line-height: 38px; padding-left: .5px; white-space: nowrap; }
.lead { margin: 87px 102px 0 -30px; text-align: right; font-size: 27.500px; font-weight: 700; line-height: 30px; white-space: nowrap; }
.lead.second { margin: 0 134px 0 -30px; }
.code { width: 330px; height: 31px; margin-top: 82px; background: #ffffc8; border: 1px solid #8a8a60; border-width: 1px 0; }
.code.two { width: 329px; height: 56px; margin-top: 67px; }
.brand { height: 29px; margin-top: 138px; background: #f00; padding: 4px 0 0 198px; }
.brand text { font: 400 20px "DejaVu Sans", sans-serif; fill: #fff; stroke: #fff; stroke-width: .8; }
.copy { margin: 3px 0 0 -8px; font-size: 15.300px; line-height: 20px; white-space: nowrap; color: #eee; }
.grey { width: 261px; background: linear-gradient(#9a989b, #9a9a9a); }
.scroll {
  width: 19px;
  display: flex;
  flex-direction: column;
  align-items: center;
  background: #f1f1f3;
  padding: 6px 0 5px;
}
.scroll i { width: 17px; height: 19px; background: #cdcdcd; margin: 421px 0 auto; }
.collapse { width: 21px; background: #eaeaea; border: solid #c8c8c8; border-width: 0 1px; display: flex; align-items: center; justify-content: center; }
.rail { width: 52px; display: flex; flex-direction: column; align-items: center; background: #fdfdfd; overflow: hidden; padding: 1px 0 0 2px; }
.rail span { height: 51.7px; display: flex; align-items: center; justify-content: center; flex: none; }
.rail .r-zoom { width: 36px; height: 52px; border-bottom: 1px solid #d0d0d0; }
.rail .r-more { height: 53px; width: 32px; border-bottom: 1px solid #d0d0d0; padding-bottom: 1px; }
.rail .r-out { height: 51px; padding-left: 4px; }
.teal { color: #1f9384; }
.pink { color: #d13a7d; }
.red { color: #d84450; }
.yellow { color: #d0bd22; }
.violet { color: #6860e0; }
.green { color: #80c340; }
.magenta { color: #b83cc4; }

.rtask {
  height: 42px;
  display: flex;
  align-items: center;
  background: linear-gradient(90deg, #1d1d1d 370px, #3a1a19 425px, #3a1a19 450px, #1e1c1c 520px, #1c1c1c);
  color: #e0e0e0;
  font-size: 14px;
  letter-spacing: -.5px;
  border-right: 5px solid #1b1b1b;
}
.rtask span { display: flex; justify-content: center; }
.r-cmd { width: 37px; }
.r-note { width: 66px; padding-left: 6px; }
.r-acro { width: 54px; height: 42px; align-items: center; background: #474747; border-right: 4px solid #555; padding-left: 4px; }
.r-sun { width: 21px; margin-left: 180px; }
.r-temp { width: 33px; margin-left: 11px; font-size: 15.500px; padding-top: 2px; }
.r-c1 { width: 26px; margin-left: 14px; }
.r-c2 { width: 26px; }
.r-c3 { width: 28px; }
.rtask .r-lang, .rtask .r-time { display: block; text-align: center; line-height: 19px; }
.r-lang { width: 40px; }
.r-time { width: 78px; }
.r-bell { width: 30px; margin-left: 13px; }
.tiny { font: 700 7px "Liberation Mono", monospace; fill: #ddd; }
.badge { font: 700 14px "Open Sans", sans-serif; fill: #fff; }

/* Start menu */
.start {
  position: absolute;
  left: 0;
  top: 59px;
  width: 972px;
  height: 961px;
  display: flex;
  overflow: hidden;
  font-size: 17.5px;
  letter-spacing: -.33px;
  word-spacing: .7px;
  box-shadow: 0 0 16px rgba(0, 0, 0, .45);
  background:
    radial-gradient(ellipse 520px 210px at 760px 880px, #342022, rgba(50, 32, 34, 0)),
    radial-gradient(ellipse 400px 220px at 860px 590px, #2b2c27, rgba(42, 43, 38, 0)),
    radial-gradient(ellipse 380px 180px at 800px 350px, #232323 40%, rgba(35, 35, 35, 0)),
    radial-gradient(ellipse 560px 180px at 640px 160px, #383838, rgba(56, 56, 56, 0)),
    radial-gradient(ellipse 300px 260px at 400px 960px, #3a3635, rgba(56, 52, 51, 0)),
    linear-gradient(90deg, #242424, #262626 120px, #303030 350px, #282828 600px);
}
.srail { width: 76px; display: flex; flex-direction: column; justify-content: space-between; padding-top: 37px; }
.srail > svg { margin-left: 26px; }
.srail-bottom span { height: 72px; display: flex; align-items: center; justify-content: center; }
.applist { width: 410px; padding: 15px 0 0 21px; }
.head { height: 54px; display: flex; align-items: center; margin-left: -3px; }
.head.first { height: 51px; margin-left: -1px; padding-top: 3px; }
.expand .chev { margin-left: 7px; }
.letter { height: 54px; width: 32px; padding-top: 17px; line-height: 26px; text-align: center; }
.app { height: 54px; display: flex; align-items: center; gap: 13px; }
.app > .chev { margin: 0 38px 0 auto; }
.app .pull { margin: 0 -1px 0 -1px; }
.app small { display: block; font-size: 17.500px; line-height: 23px; color: #76b9ed; }
.two span { line-height: 25px; }
.two > svg { margin-top: -2px; }
.two, .loose { letter-spacing: -.14px; }
.sql { font: 700 7.500px "DejaVu Sans Mono", monospace; fill: #fff; letter-spacing: 0; }
.chev { color: #ddd; }
.tiles { flex: 1; }
.ghead { height: 75px; padding-top: 32px; line-height: 24px; }
.grid { display: grid; grid-template-columns: repeat(3, 150px); grid-auto-rows: 150px; gap: 6px; }
.lower { margin-top: 60px; }
.tile {
  position: relative;
  display: flex;
  flex-direction: column;
  justify-content: space-between;
  padding: 52px 12px 7px;
  background: rgba(255, 255, 255, .115);
}
.tile > svg { align-self: center; margin-right: 3px; }
.tile > .raise { margin: -4px 3px -20px 0; }
.tile > span { line-height: 23px; white-space: nowrap; }
.weather { padding: 6px 12px 7px; background: linear-gradient(#895e4b, #92704f 35%, #977a5a 65%, #9f8a67); }
.weather b { line-height: 24px; }
.weather > b:first-child { margin-left: -1px; }
.wrow { display: flex; justify-content: space-between; padding-right: 9px; margin: -8px 0 0 -2px; }
.wrow em { font-size: 34px; font-weight: 300; line-height: 54px; letter-spacing: -.8px; }
.wrow div { line-height: 24px; padding-top: 4px; }
.wrow i { display: block; color: rgba(255, 255, 255, .55); }

/* Taskbar */
.taskbar { display: flex; align-items: center; background: #1c1c1c; position: relative; }
.winbtn { width: 72px; height: 60px; display: flex; align-items: center; justify-content: center; background: #484848; }
.search {
  width: 516px;
  height: 60px;
  border: 3px solid #0078d7;
  background: #fff;
  color: #000;
  display: flex;
  align-items: center;
  padding-left: 14px;
  font-size: 22px;
  letter-spacing: -.52px;
}
.caret { width: 1px; height: 30px; margin-left: 17px; background: #000; }
.search span { padding-top: 2px; }
.taskview { width: 75px; padding-right: 2px; display: flex; justify-content: center; }
.pin { width: 61px; height: 60px; margin: 0 6px 0 8px; display: flex; align-items: center; justify-content: center; border-bottom: 3px solid transparent; padding-top: 3px; }
.pin.on { border-bottom-color: #76b9ed; }
.pin.multi { border-image: linear-gradient(90deg, #76b9ed 47px, #46698a 47px, #46698a 49px, #6293be 49px) 3; border-width: 0 0 3px; border-style: solid; }
.tray-sun { margin-left: 316px; }
.tray-weather { display: flex; gap: 13px; width: 129px; margin-left: 16px; font-size: 21px; letter-spacing: -.55px; padding-top: 3px; }
.tray-ic { width: 36.500px; display: flex; justify-content: center; }
.tray-lang, .tray-time { line-height: 28px; font-size: 17.500px; letter-spacing: -.4px; text-align: center; padding-top: 1px; }
.tray-lang { width: 51px; }
.tray-time { width: 118px; letter-spacing: 0; }
.tray-bell { margin-left: 16px; }
.peek { width: 1px; height: 60px; margin-left: auto; margin-right: 7px; background: #777; }
```
